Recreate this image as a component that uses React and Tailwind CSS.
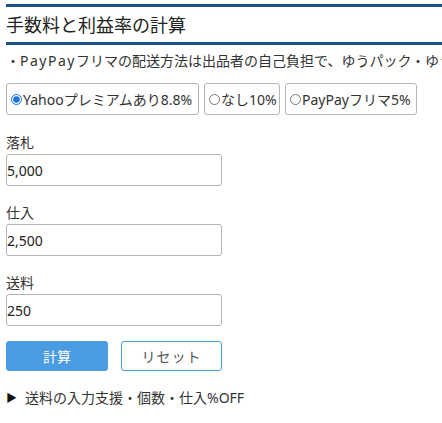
import React, { useState } from "react";

const FONT = "font-['Noto_Sans','Noto_Sans_CJK_JP',sans-serif]";

const RATES = [
  { id: "yahoo", label: "Yahooプレミアムあり8.8%", width: "w-[193px]" },
  { id: "none", label: "なし10%", width: "w-[76px]" },
  { id: "paypay", label: "PayPayフリマ5%", width: "w-[132px]" },
];

function Field({ label, value, onChange }) {
  return (
    <div className="flex flex-col">
      <label className="text-[14px] leading-[16px] text-[#333] mb-[3px]">{label}</label>
      <input
        value={value}
        onChange={(e) => onChange(e.target.value)}
        className="w-[216px] h-[32px] border border-[#b5b5b5] rounded-[3px] px-0 text-[14px] text-[#222] outline-none"
      />
    </div>
  );
}

export default function App() {
  const [rate, setRate] = useState("yahoo");
  const [bid, setBid] = useState("5,000");
  const [cost, setCost] = useState("2,500");
  const [ship, setShip] = useState("250");

  return (
    <div className={`w-[442px] h-[423px] overflow-hidden bg-white pl-[6px] pt-[4px] ${FONT}`}>
      <div className="border-t-[3px] border-[#1b5189]" />
      <h2 className="h-[35px] flex items-center text-[18px] leading-[22px] text-[#222] font-normal">
        手数料と利益率の計算
      </h2>
      <div className="border-t-[3px] border-[#1b5189]" />

      <p className="mt-[6px] whitespace-nowrap text-[14px] leading-[20px] text-[#333]">
        ・<span className="tracking-[1.5px]">PayPay</span>フリマの配送方法は出品者の自己負担で、ゆうパック・ゆうパケット
      </p>

      <div className="flex gap-[5px] mt-[12px]">
        {RATES.map((r) => (
          <label
            key={r.id}
            className={`flex items-center h-[32px] border border-[#b5b5b5] rounded-[3px] text-[14px] text-[#333] whitespace-nowrap cursor-pointer ${r.width}`}
          >
            <input
              type="radio"
              name="rate"
              checked={rate === r.id}
              onChange={() => setRate(r.id)}
              className="w-[11px] h-[11px] m-0 ml-[4px] mr-px accent-[#1a73e8]"
            />
            {r.label}
          </label>
        ))}
      </div>

      <div className="flex flex-col gap-[19px] mt-[20px]">
        <Field label="落札" value={bid} onChange={setBid} />
        <Field label="仕入" value={cost} onChange={setCost} />
        <Field label="送料" value={ship} onChange={setShip} />
      </div>

      <div className="flex gap-[13px] mt-[15px]">
        <button className="w-[102px] h-[30px] rounded-[3px] bg-[#4b9be2] text-white text-[14px]">
          計算
        </button>
        <button className="w-[101px] h-[30px] rounded-[3px] border border-[#4b9be2] bg-white text-[#555] text-[14px] tracking-[1px]">
          リセット
        </button>
      </div>

      <details className="mt-[17px] text-[14px] leading-[20px] text-[#333]">
        <summary className="list-none flex items-center gap-[8px] cursor-pointer">
          <span className="text-[11px] text-[#111]">▶</span>
          送料の入力支援・個数・仕入%OFF
        </summary>
      </details>
    </div>
  );
}
